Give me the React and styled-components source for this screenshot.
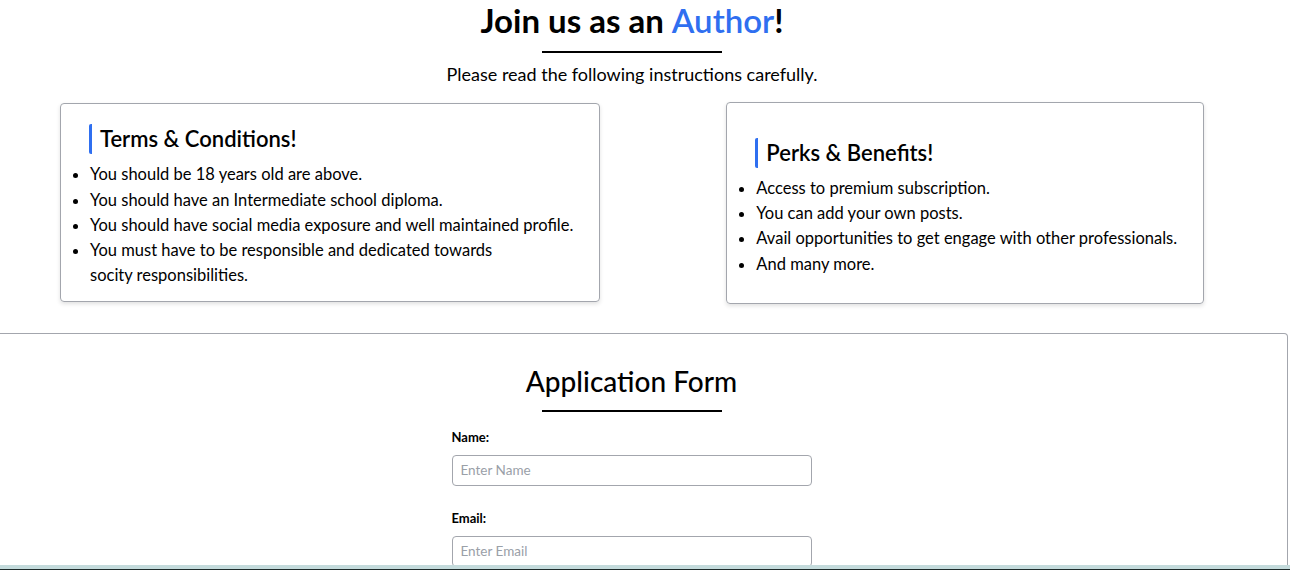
import React from "react";
import styled, { createGlobalStyle } from "styled-components";

const Global = createGlobalStyle`
  html, body {
    margin: 0;
    padding: 0;
    background: #fff;
    font-family: Lato, "Noto Sans", sans-serif;
    color: #000;
    overflow: hidden;
  }
`;

const Page = styled.div`
  width: 1290px;
  height: 570px;
  overflow: hidden;
`;

const Intro = styled.header`
  width: 1264px;
  display: flex;
  flex-direction: column;
  align-items: center;
`;

const Title = styled.h1`
  margin: 0;
  font-size: 33px;
  font-weight: 700;
  line-height: 40px;
  span {
    color: #2f6ff0;
    font-weight: 600;
  }
`;

const Rule = styled.div`
  width: 180px;
  height: 2px;
  background: #000;
  margin: ${(p) => p.$margin};
`;

const Subtitle = styled.p`
  margin: 0;
  font-size: 18px;
  line-height: 24px;
`;

const Cards = styled.section`
  display: flex;
  align-items: center;
  gap: 126px;
  padding-left: 60px;
  margin-top: 16px;
`;

const Card = styled.div`
  display: flex;
  flex-direction: column;
  justify-content: center;
  border: 1px solid #a3a6ad;
  border-radius: 4px;
  box-shadow: 0 2px 4px rgba(0, 0, 0, 0.12);
  padding: ${(p) => p.$top} 26px ${(p) => p.$bottom} 0;
`;

const CardTitle = styled.h2`
  margin: 0 0 8px 28px;
  padding-left: 8px;
  border-left: 3px solid #2f6ff0;
  border-radius: 2px;
  font-size: 22px;
  font-weight: 600;
  line-height: 30px;
`;

const List = styled.ul`
  margin: 0;
  padding-left: 29px;
  li {
    font-size: 16.5px;
    line-height: 25.2px;
  }
`;

const FormBox = styled.section`
  margin-top: 29px;
  width: 1263px;
  padding-right: 24px;
  border: 1px solid #a3a6ad;
  border-left: none;
  border-radius: 0 4px 0 0;
  height: 300px;
  display: flex;
  flex-direction: column;
  align-items: center;
  padding-top: 30px;
`;

const FormTitle = styled.h2`
  margin: 0;
  font-size: 28px;
  font-weight: 500;
  line-height: 34px;
`;

const Form = styled.form`
  width: 360px;
  margin-top: 17px;
  display: flex;
  flex-direction: column;
`;

const Field = styled.div`
  display: flex;
  flex-direction: column;
  margin-bottom: 24px;
`;

const Label = styled.label`
  font-size: 13px;
  font-weight: 700;
  line-height: 16px;
  margin-bottom: 10px;
`;

const Input = styled.input`
  box-sizing: border-box;
  height: 31px;
  width: 360px;
  border: 1px solid #a3a6ad;
  border-radius: 4px;
  padding: 0 8px;
  font-family: inherit;
  font-size: 13.5px;
  &::placeholder {
    color: #9aa0a8;
  }
`;

const BottomEdge = styled.div`
  position: fixed;
  left: 0;
  right: 0;
  bottom: 0;
  height: 4px;
  background: #c4dbdc;
  border-bottom: 1px solid #1e2a2a;
`;

export default function App() {
  return (
    <Page>
      <Global />
      <Intro>
        <Title>
          Join us as an <span>Author</span>!
        </Title>
        <Rule $margin="11px 0 9px" />
        <Subtitle>Please read the following instructions carefully.</Subtitle>
      </Intro>
      <Cards>
        <Card $top="20px" $bottom="13px">
          <CardTitle>Terms &amp; Conditions!</CardTitle>
          <List>
            <li>You should be 18 years old are above.</li>
            <li>You should have an Intermediate school diploma.</li>
            <li>You should have social media exposure and well maintained profile.</li>
            <li>
              You must have to be responsible and dedicated towards
              <br />
              socity responsibilities.
            </li>
          </List>
        </Card>
        <Card $top="35px" $bottom="26px">
          <CardTitle>Perks &amp; Benefits!</CardTitle>
          <List>
            <li>Access to premium subscription.</li>
            <li>You can add your own posts.</li>
            <li>Avail opportunities to get engage with other professionals.</li>
            <li>And many more.</li>
          </List>
        </Card>
      </Cards>
      <FormBox>
        <FormTitle>Application Form</FormTitle>
        <Rule $margin="12px 0 0" />
        <Form>
          <Field>
            <Label>Name:</Label>
            <Input placeholder="Enter Name" />
          </Field>
          <Field>
            <Label>Email:</Label>
            <Input placeholder="Enter Email" />
          </Field>
        </Form>
      </FormBox>
      <BottomEdge />
    </Page>
  );
}
